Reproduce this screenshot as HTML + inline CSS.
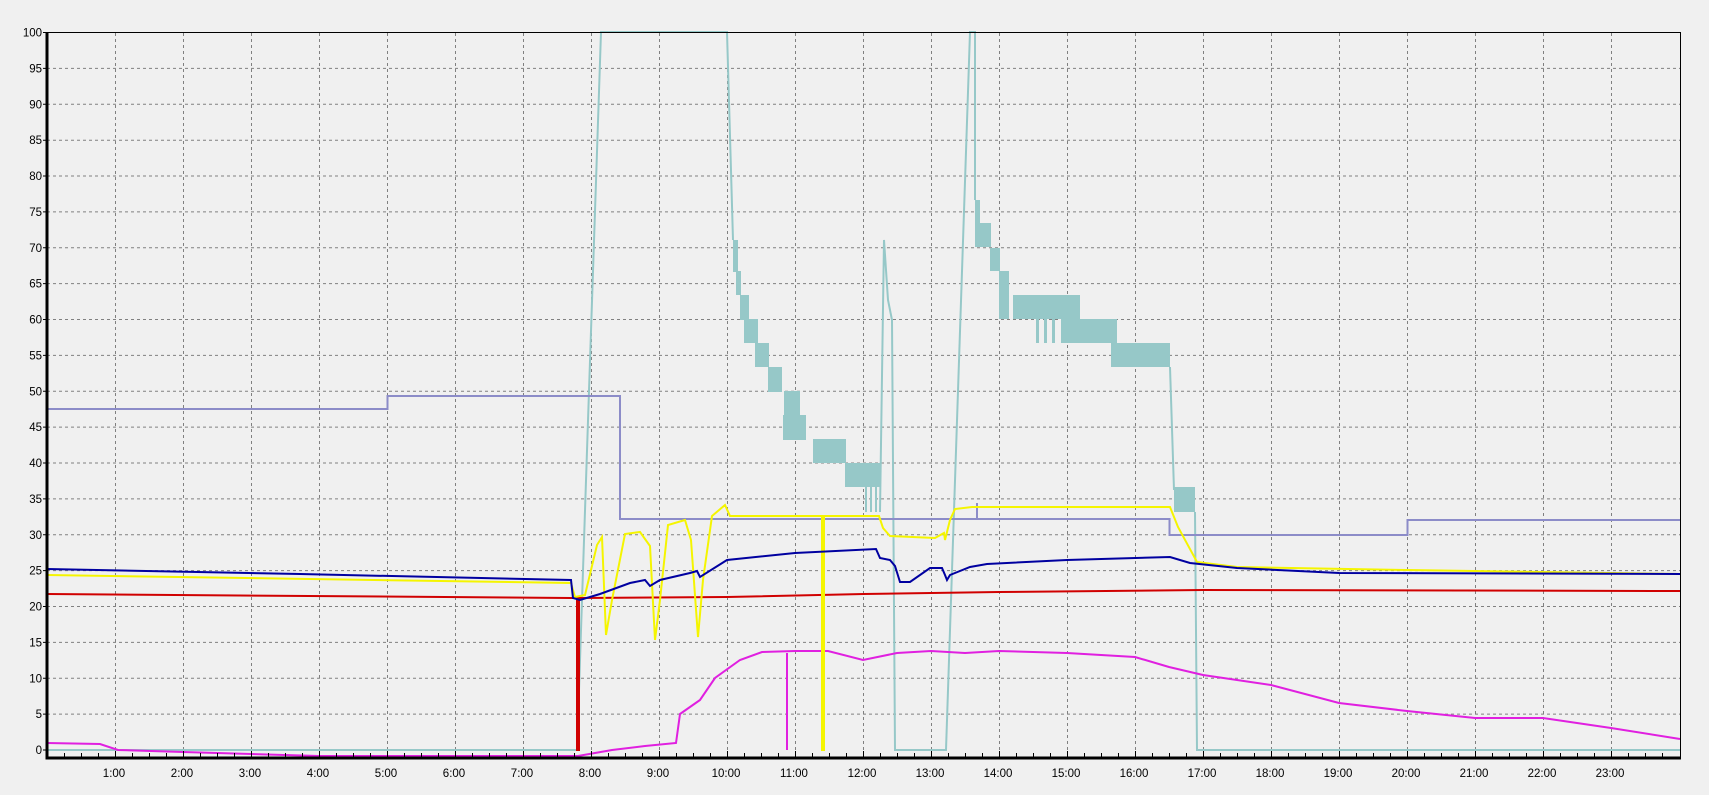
<!DOCTYPE html>
<html><head><meta charset="utf-8"><style>
html,body{margin:0;padding:0;background:#f0f0f0;width:1709px;height:795px;overflow:hidden}
svg{display:block}
text{font-family:"Liberation Sans",sans-serif;font-size:11.5px;fill:#000}
</style></head><body>
<svg width="1709" height="795" viewBox="0 0 1709 795" xmlns="http://www.w3.org/2000/svg">
<rect width="1709" height="795" fill="#f0f0f0"/>
<g id="grid" stroke="#808080" stroke-width="1" stroke-dasharray="3,3" fill="none">
<path d="M47 68.4H1680M47 104.3H1680M47 140.2H1680M47 176H1680M47 211.9H1680M47 247.8H1680M47 283.6H1680M47 319.5H1680M47 355.4H1680M47 391.3H1680M47 427.1H1680M47 463H1680M47 498.9H1680M47 534.8H1680M47 570.6H1680M47 606.5H1680M47 642.4H1680M47 678.3H1680M47 714.1H1680"/>
<path d="M115.5 33V757M183.5 33V757M251.5 33V757M319.5 33V757M387.5 33V757M455.5 33V757M523.5 33V757M591.5 33V757M659.5 33V757M727.5 33V757M795.5 33V757M863.5 33V757M931.5 33V757M999.5 33V757M1067.5 33V757M1135.5 33V757M1203.5 33V757M1271.5 33V757M1339.5 33V757M1407.5 33V757M1475.5 33V757M1543.5 33V757M1611.5 33V757"/>
</g>
<!-- teal -->
<g fill="#96c8c8" stroke="none">
<rect x="733" y="240" width="5" height="32"/><rect x="736" y="271" width="5" height="24"/>
<rect x="740" y="295" width="9" height="25"/><rect x="744" y="319" width="14" height="24"/>
<rect x="755" y="343" width="14" height="24"/><rect x="768" y="367" width="14" height="25"/>
<rect x="784" y="391" width="16" height="25"/><rect x="783" y="415" width="21" height="25"/>
<rect x="794" y="415" width="12" height="25"/><rect x="813" y="439" width="33" height="24"/>
<rect x="845" y="463" width="35" height="24"/><rect x="865" y="487" width="2" height="25"/>
<rect x="870" y="487" width="2" height="25"/><rect x="875" y="487" width="2" height="25"/>
<rect x="975" y="200" width="5" height="47"/><rect x="977" y="223" width="14" height="24"/>
<rect x="990" y="248" width="10" height="23"/><rect x="999" y="271" width="10" height="48"/>
<rect x="1013" y="295" width="67" height="24"/><rect x="1036" y="319" width="3" height="24"/>
<rect x="1044" y="319" width="3" height="24"/><rect x="1052" y="319" width="3" height="24"/>
<rect x="1061" y="319" width="56" height="24"/><rect x="1111" y="343" width="59" height="24"/>
<rect x="1174" y="487" width="21" height="25"/>
</g>
<path fill="none" stroke="#96c8c8" stroke-width="2" d="M47 750H577L601 32H727L733 240M880 512L884 240L888 300L892 320L895 750H946L970 32H975V200M1170 367L1174 490M1195 512L1197 750H1680"/>
<!-- lavender -->
<path fill="none" stroke="#8c8cc8" stroke-width="2" d="M47.5 409H387.5V396H620V519H1169.5V535H1407.5V520H1680M977 519V503"/>
<!-- red -->
<path fill="none" stroke="#d00000" stroke-width="2" d="M47 594L571 598L577 598L577 750L579 750L579 598L727 597L864 594L999 592L1203 590L1680 591"/>
<!-- magenta -->
<path fill="none" stroke="#e020e0" stroke-width="2" d="M47 743L100 744L118 750L183 752L251 754L319 756L578 756L612 750L645 746L676 743L680 714L700 700L715 678L740 660L762 652L795 651L828 651L863 660L897 653L931 651L965 653L999 651L1067 653L1135 657L1169 667L1203 675L1271 685L1339 703L1407 711L1475 718L1543 718L1611 728L1680 739M787 750V653"/>
<!-- yellow -->
<path fill="none" stroke="#f5f500" stroke-width="2" d="M47 575L571 583L575 597L585 595L597 545L602 537L606 635L612 600L625 534L640 532L650 546L655 640L660 600L668 525L685 520L691 540L698 637L703 580L712 516L725 505L730 516L822 516L822 750L824 750L824 516L879 516L883 528L890 536L935 538L944 533L945 540L950 520L955 509L972 507L1170 507L1178 527L1197 562L1237 567L1407 570L1680 574"/>
<!-- dark blue -->
<path fill="none" stroke="#0000a0" stroke-width="2" d="M47 569L300 574L571 580L573 598L580 600L600 594L630 583L645 580L650 586L660 580L690 573L697 571L700 577L727 560L795 553L876 549L880 558L890 560L895 566L900 582L910 582L930 568L942 568L945 575L947 580L950 575L970 567L987 564L1067 560L1170 557L1190 563L1237 568L1339 573L1680 574"/>
<!-- axes -->
<path fill="none" stroke="#000" stroke-width="1" d="M47 32.5H1680.5V758"/>
<path fill="none" stroke="#000" stroke-width="3" d="M47 32V758H1681"/>
<g stroke="#000" stroke-width="1" id="ticks">
<path d="M43 32.5H47M43 68.4H47M43 104.3H47M43 140.2H47M43 176H47M43 211.9H47M43 247.8H47M43 283.6H47M43 319.5H47M43 355.4H47M43 391.3H47M43 427.1H47M43 463H47M43 498.9H47M43 534.8H47M43 570.6H47M43 606.5H47M43 642.4H47M43 678.3H47M43 714.1H47M43 750H47"/>
</g>
<g id="ytick" font-size="11.5" text-anchor="end">
<text x="42" y="36.5">100</text><text x="42" y="72.4">95</text><text x="42" y="108.3">90</text><text x="42" y="144.2">85</text><text x="42" y="180">80</text><text x="42" y="215.9">75</text><text x="42" y="251.8">70</text><text x="42" y="287.6">65</text><text x="42" y="323.5">60</text><text x="42" y="359.4">55</text><text x="42" y="395.3">50</text><text x="42" y="431.1">45</text><text x="42" y="467">40</text><text x="42" y="502.9">35</text><text x="42" y="538.8">30</text><text x="42" y="574.6">25</text><text x="42" y="610.5">20</text><text x="42" y="646.4">15</text><text x="42" y="682.3">10</text><text x="42" y="718.1">5</text><text x="42" y="754">0</text>
</g>
<g text-anchor="middle">
<text x="114" y="777">1:00</text><text x="182" y="777">2:00</text><text x="250" y="777">3:00</text><text x="318" y="777">4:00</text><text x="386" y="777">5:00</text><text x="454" y="777">6:00</text><text x="522" y="777">7:00</text><text x="590" y="777">8:00</text><text x="658" y="777">9:00</text><text x="726" y="777">10:00</text><text x="794" y="777">11:00</text><text x="862" y="777">12:00</text><text x="930" y="777">13:00</text><text x="998" y="777">14:00</text><text x="1066" y="777">15:00</text><text x="1134" y="777">16:00</text><text x="1202" y="777">17:00</text><text x="1270" y="777">18:00</text><text x="1338" y="777">19:00</text><text x="1406" y="777">20:00</text><text x="1474" y="777">21:00</text><text x="1542" y="777">22:00</text><text x="1610" y="777">23:00</text>
</g>
<path stroke="#000" stroke-width="1" fill="none" d="M64.5 757v-4M81.5 757v-4M98.5 757v-4M115.5 757v-6M132.5 757v-4M149.5 757v-4M166.5 757v-4M183.5 757v-6M200.5 757v-4M217.5 757v-4M234.5 757v-4M251.5 757v-6M268.5 757v-4M285.5 757v-4M302.5 757v-4M319.5 757v-6M336.5 757v-4M353.5 757v-4M370.5 757v-4M387.5 757v-6M404.5 757v-4M421.5 757v-4M438.5 757v-4M455.5 757v-6M472.5 757v-4M489.5 757v-4M506.5 757v-4M523.5 757v-6M540.5 757v-4M557.5 757v-4M574.5 757v-4M591.5 757v-6M608.5 757v-4M625.5 757v-4M642.5 757v-4M659.5 757v-6M676.5 757v-4M693.5 757v-4M710.5 757v-4M727.5 757v-6M744.5 757v-4M761.5 757v-4M778.5 757v-4M795.5 757v-6M812.5 757v-4M829.5 757v-4M846.5 757v-4M863.5 757v-6M880.5 757v-4M897.5 757v-4M914.5 757v-4M931.5 757v-6M948.5 757v-4M965.5 757v-4M982.5 757v-4M999.5 757v-6M1016.5 757v-4M1033.5 757v-4M1050.5 757v-4M1067.5 757v-6M1084.5 757v-4M1101.5 757v-4M1118.5 757v-4M1135.5 757v-6M1152.5 757v-4M1169.5 757v-4M1186.5 757v-4M1203.5 757v-6M1220.5 757v-4M1237.5 757v-4M1254.5 757v-4M1271.5 757v-6M1288.5 757v-4M1305.5 757v-4M1322.5 757v-4M1339.5 757v-6M1356.5 757v-4M1373.5 757v-4M1390.5 757v-4M1407.5 757v-6M1424.5 757v-4M1441.5 757v-4M1458.5 757v-4M1475.5 757v-6M1492.5 757v-4M1509.5 757v-4M1526.5 757v-4M1543.5 757v-6M1560.5 757v-4M1577.5 757v-4M1594.5 757v-4M1611.5 757v-6M1628.5 757v-4M1645.5 757v-4M1662.5 757v-4"/>
</svg>
</body></html>
